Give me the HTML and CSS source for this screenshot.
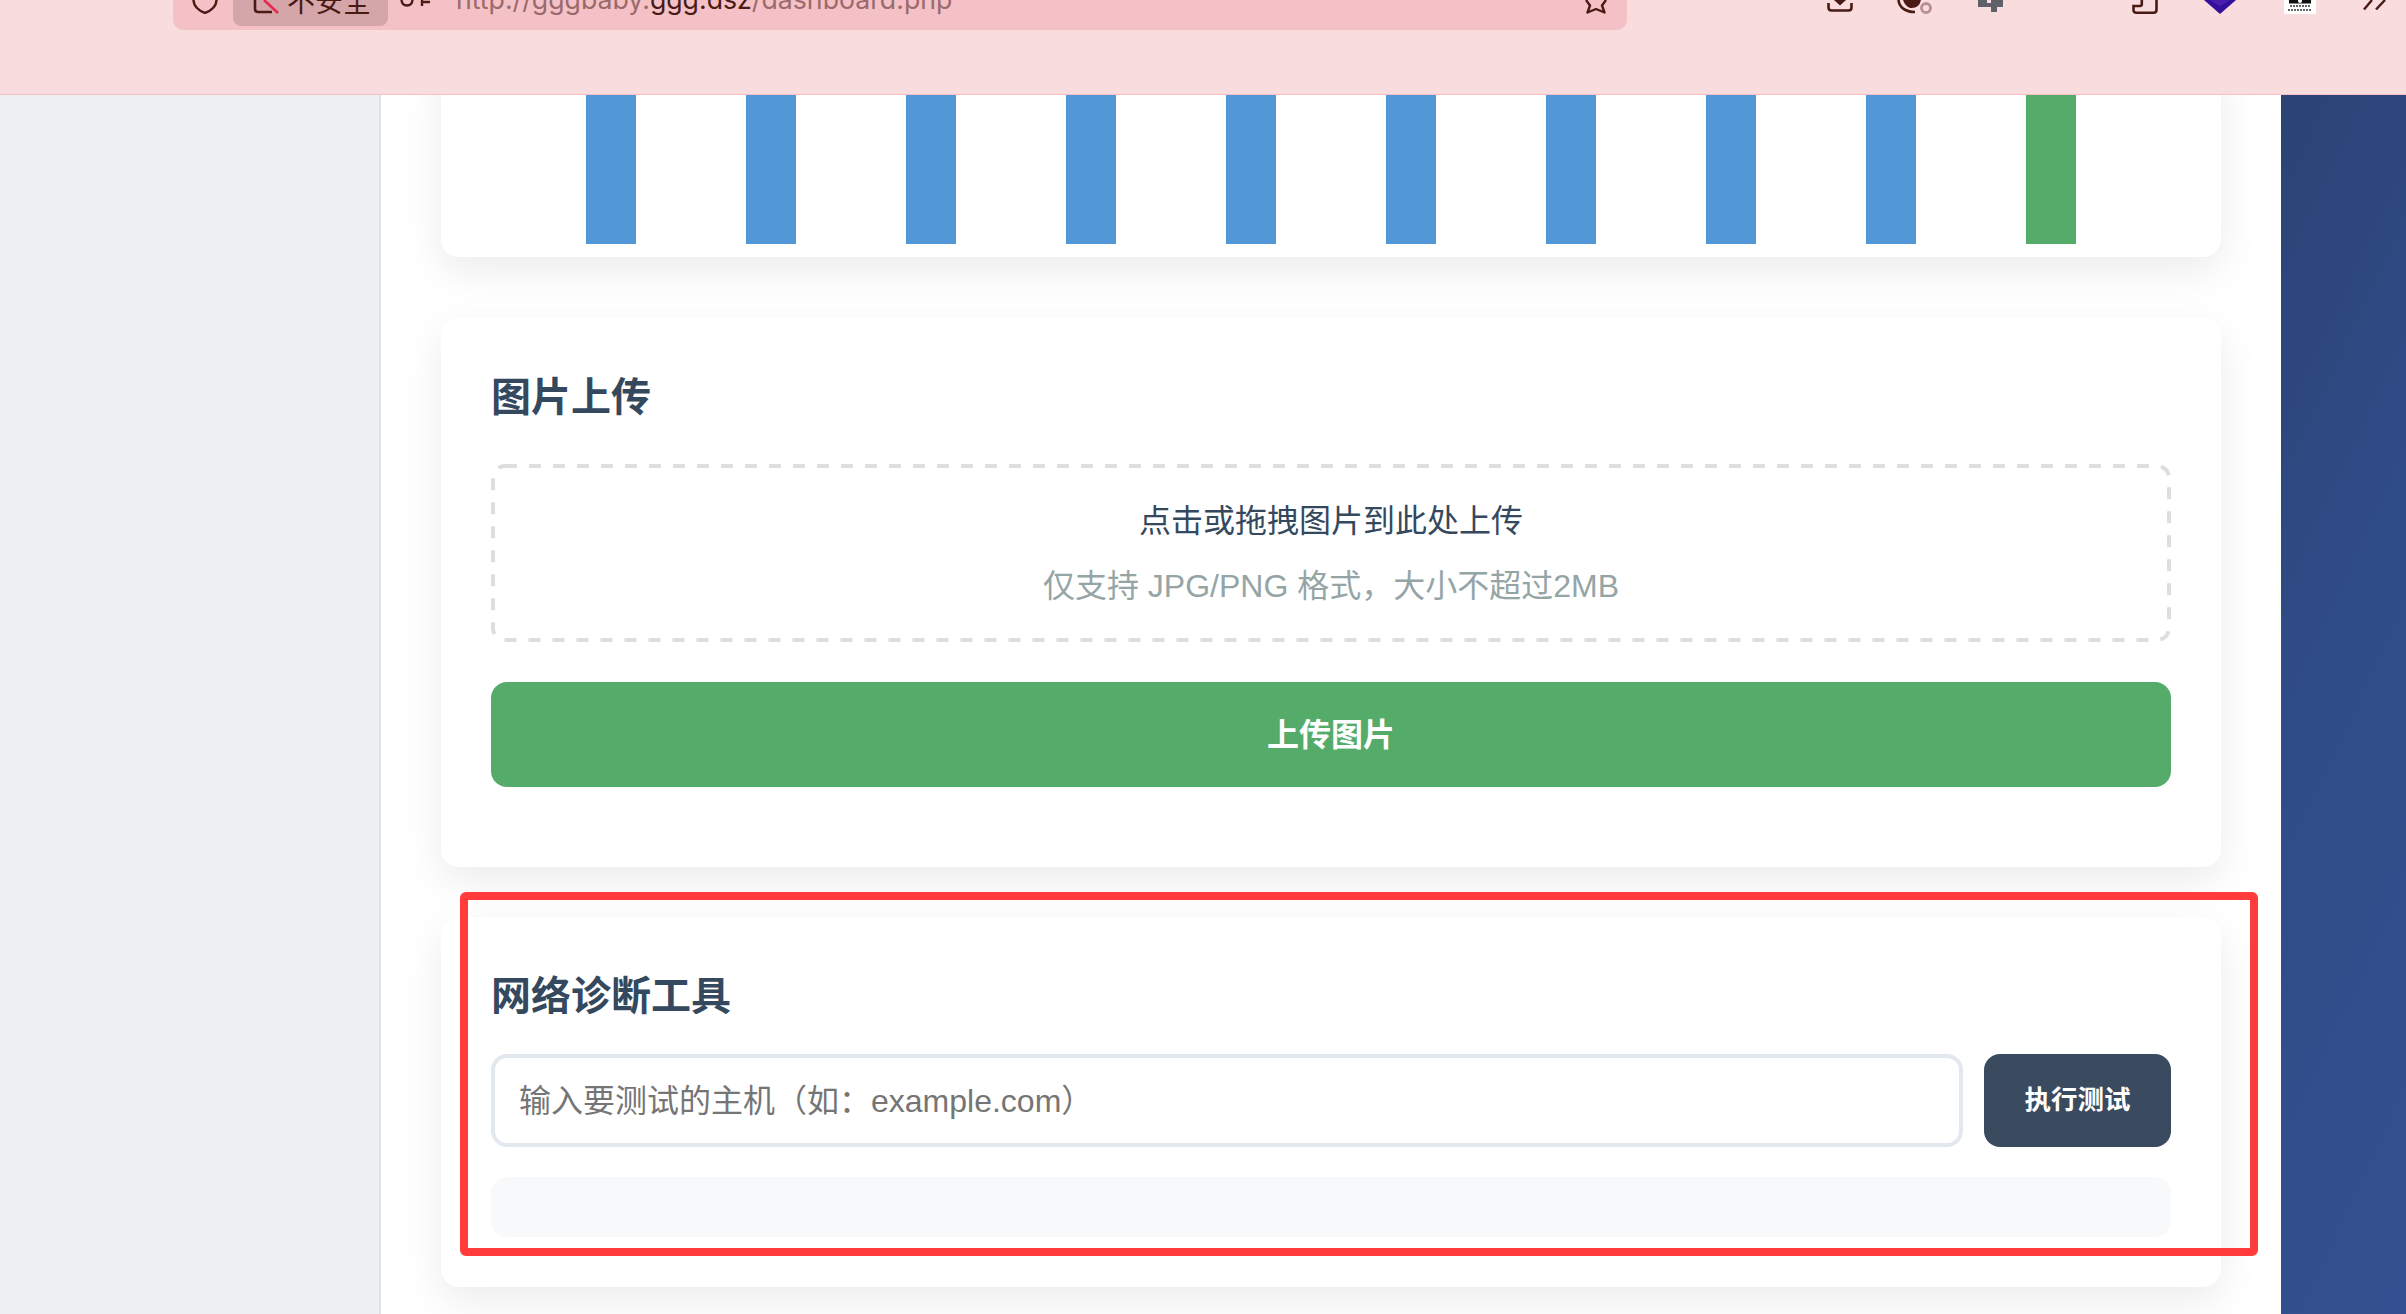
FILE: index.html
```html
<!DOCTYPE html>
<html lang="zh-CN">
<head>
<meta charset="utf-8">
<title>仪表盘</title>
<link rel="stylesheet" href="styles.css">
</head>
<body>
<div class="page">
  <header class="chrome">
    <div class="urlbar">
      <svg class="ico-shield" viewBox="0 0 26 14"><path d="M1.5 0 C1.5 6 7 11 13 13 C19 11 24.500 6 24.500 0" fill="none" stroke="#4a1a14" stroke-width="2.400"/></svg>
      <div class="chip">
        <svg class="ico-doc" viewBox="0 0 26 14"><path d="M2 0 V9 Q2 12 5 12 H19" fill="none" stroke="#4a1a14" stroke-width="2.600"/><path d="M11 0 L25 13" stroke="#e8294f" stroke-width="2.600"/></svg>
        <span class="chip-text">不安全</span>
      </div>
      <svg class="ico-tune" viewBox="0 0 32 7"><path d="M1.500 0 Q2 5.500 7 5.500 Q12 5.500 12.500 0" fill="none" stroke="#4a1a14" stroke-width="2.400"/><path d="M22 0 V6 M22 2 H30" fill="none" stroke="#4a1a14" stroke-width="2.400"/></svg>
      <span class="url">http://gggbaby.<b>ggg.dsz</b>/dashboard.php</span>
      <svg class="ico-star" viewBox="0 0 24 14"><path d="M2 0 L6 5.500 L3.500 12.500 L12 9 L20.500 12.500 L18 5.500 L22 0" fill="none" stroke="#4a1a14" stroke-width="2.400" stroke-linejoin="round"/></svg>
    </div>
    <div class="tools">
      <svg class="ico-down" viewBox="0 0 26 12"><path d="M1.500 3 V7.500 Q1.500 10.500 4.500 10.500 H21.500 Q24.500 10.500 24.500 7.500 V3" fill="none" stroke="#4a1a14" stroke-width="2.600"/><path d="M7 0 H19 L13 5.500 Z" fill="#4a1a14"/></svg>
      <svg class="ico-ext" viewBox="0 0 36 14"><path d="M1.500 0 C2 7 8 12 18 12" fill="none" stroke="#4a1a14" stroke-width="2.600"/><path d="M6 0 H24 Q22 9 13 8 Q8 6 6 0 Z" fill="#4a1a14"/><circle cx="29" cy="8" r="4.500" fill="#f9dcde" stroke="#b98f90" stroke-width="2.800"/></svg>
      <svg class="ico-puzzle" viewBox="0 0 25 12"><path d="M0 0 H9 V3 H13 V0 H25 V7 H19 V12 H13 V7 H0 Z" fill="#5f6068"/></svg>
      <svg class="ico-page" viewBox="0 0 26 14"><path d="M24.500 0 V10 Q24.500 12.700 21.500 12.700 H4.500 Q1.500 12.700 1.500 10 V6 L8 6 Q9.800 6 9.800 4 V0" fill="none" stroke="#4a1a14" stroke-width="2.600"/></svg>
      <svg class="ico-gem" viewBox="0 0 32 14"><path d="M0 0 H32 L16 14 Z" fill="#33109a"/><path d="M6 0 H26 L16 6 Z" fill="#4a1fb0"/></svg>
      <svg class="ico-qr" viewBox="0 0 32 14"><rect width="32" height="14" fill="#fff"/><rect x="5" y="0" width="22" height="3.500" fill="#111"/><circle cx="16" cy="1" r="2" fill="#fff"/><path d="M6 6 H26 M4 10 H28" stroke="#333" stroke-width="1.500" stroke-dasharray="2 1"/></svg>
      <svg class="ico-more" viewBox="0 0 24 10"><path d="M1 9.500 L9 0 M13 9.500 L22 0" fill="none" stroke="#4a1a14" stroke-width="2.400"/></svg>
    </div>
  </header>

  <div class="body-row">
    <aside class="side"></aside>
    <main class="main">
      <section class="card card-chart">
        <div class="bars">
          <div class="bar"></div><div class="bar"></div><div class="bar"></div><div class="bar"></div><div class="bar"></div>
          <div class="bar"></div><div class="bar"></div><div class="bar"></div><div class="bar"></div><div class="bar bar-green"></div>
        </div>
      </section>

      <section class="card card-upload">
        <h3 class="title">图片上传</h3>
        <div class="drop">
          <svg class="drop-border" viewBox="0 0 1680 178"><rect x="2" y="2" width="1676" height="174" rx="12" fill="none" stroke="#dedede" stroke-width="4" stroke-dasharray="12 12"/></svg>
          <p class="drop-main">点击或拖拽图片到此处上传</p>
          <p class="drop-sub">仅支持 JPG/PNG 格式，大小不超过2MB</p>
        </div>
        <button class="btn-upload" type="button">上传图片</button>
      </section>

      <section class="card card-net">
        <h3 class="title title-net">网络诊断工具</h3>
        <div class="net-row">
          <input class="net-input" type="text" placeholder="输入要测试的主机（如：example.com）">
          <button class="btn-run" type="button">执行测试</button>
        </div>
        <div class="net-result"></div>
      </section>
    </main>
    <aside class="rail"></aside>
  </div>

  <div class="highlight"></div>
</div>
</body>
</html>
```

FILE: styles.css
```css
* { box-sizing: border-box; }
html, body { margin: 0; padding: 0; }
body {
  width: 2406px;
  height: 1314px;
  overflow: hidden;
  background: #fff;
  font-family: "Liberation Sans", "Noto Sans CJK SC", sans-serif;
}
.page { position: relative; width: 2406px; height: 1314px; display: flex; flex-direction: column; overflow: hidden; }

/* browser chrome, cut off by the top of the screenshot */
.chrome {
  flex: 0 0 95px;
  display: flex;
  align-items: flex-start;
  padding-left: 173px;
  background: #f9dcde;
  border-bottom: 1px solid #f6c1c6;
}
.urlbar {
  flex: 0 0 1454px;
  height: 30px;
  display: flex;
  align-items: flex-start;
  background: #f4c2c6;
  border-radius: 0 0 10px 10px;
  overflow: hidden;
  color: #4a1a14;
}
.urlbar svg, .tools svg { display: block; flex: none; }
.ico-shield { width: 26px; height: 14px; margin-left: 19px; }
.chip {
  width: 155px;
  height: 26px;
  margin-left: 15px;
  padding-left: 20px;
  display: flex;
  align-items: flex-end;
  overflow: hidden;
  background: #d5a6a9;
  border-radius: 0 0 8px 8px;
}
.ico-doc { width: 26px; height: 14px; align-self: flex-start; }
.chip-text {
  margin-left: 8px;
  margin-bottom: 12px;
  flex: none;
  font-size: 28px;
  line-height: 28px;
  height: 28px;
  color: #4a1a14;
  white-space: nowrap;
  font-family: "Noto Sans CJK SC", sans-serif;
  margin-top: -14px;
}
.ico-tune { width: 32px; height: 7px; margin-left: 12px; }
.url {
  margin-left: 24px;
  margin-top: -17px;
  font-family: Inter, "Liberation Sans", sans-serif;
  font-size: 26.700px;
  line-height: 32px;
  color: #9b6a6c;
  white-space: nowrap;
  flex: none;
  width: 1128px;
}
.url b { font-weight: 400; color: #4a1a14; }
.ico-star { width: 24px; height: 14px; }

.tools { flex: 1; display: flex; align-items: flex-start; }
.ico-down { width: 26px; height: 12px; margin-left: 200px; }
.ico-ext { width: 36px; height: 14px; margin-left: 44px; }
.ico-puzzle { width: 25px; height: 12px; margin-left: 45px; }
.ico-page { width: 26px; height: 14px; margin-left: 129px; }
.ico-gem { width: 32px; height: 14px; margin-left: 46px; }
.ico-qr { width: 32px; height: 14px; margin-left: 48px; }
.ico-more { width: 24px; height: 10px; margin-left: 47px; }

/* page */
.body-row { flex: 1; min-height: 0; display: flex; }
.side { flex: 0 0 381px; background: #ecf0f1; border-right: 2px solid #dfe3e6; }
.rail { flex: 0 0 125px; background: linear-gradient(115deg, #2b4375 0%, #304c88 45%, #335190 100%); }
.main { flex: 1; min-width: 0; overflow: hidden; padding: 0 60px; background: #fff; }

.card {
  background: #fff;
  border-radius: 18px;
  box-shadow: 0 14px 40px rgba(0, 0, 0, 0.08);
  margin-bottom: 50px;
}
.card-chart { margin-top: -40px; padding: 0 50px 13px; margin-bottom: 60px; }
.bars { height: 189px; display: flex; padding-left: 95px; gap: 110px; }
.bar { flex: 0 0 50px; background: #5297d6; }
.bar-green { background: #55ac6a; }

.card-upload { padding: 50px 50px 80px; }
.card-net { padding: 50px; }

.title {
  margin: 0 0 38px;
  padding-top: 2px;
  font-size: 40px;
  line-height: 57px;
  font-weight: 700;
  color: #34495e;
  font-family: "Liberation Sans", "Noto Sans CJK SC", sans-serif;
}
.title-net { margin-bottom: 29px; padding-top: 1px; }

.drop {
  position: relative;
  height: 178px;
  padding: 35px 0 0;
  text-align: center;
}
.drop-border { position: absolute; left: 0; top: 0; width: 100%; height: 100%; }
.drop-main, .drop-sub { margin: 0; font-size: 32px; line-height: 44px; }
.drop-main { color: #34495e; }
.drop-sub { margin-top: 21px; color: #95a5a6; }

.btn-upload {
  display: block;
  width: 100%;
  height: 105px;
  margin-top: 40px;
  padding-top: 2px;
  border: 0;
  border-radius: 16px;
  background: #55ac6a;
  color: #fff;
  font: 700 32px/44px "Liberation Sans", "Noto Sans CJK SC", sans-serif;
}

.net-row { display: flex; gap: 21px; }
.net-input {
  flex: 1;
  min-width: 0;
  height: 93px;
  padding: 2px 24px 0;
  border: 4px solid #e2e8ee;
  border-radius: 16px;
  background: #fff;
  font: 400 32px/44px "Liberation Sans", "Noto Sans CJK SC", sans-serif;
  outline: none;
}
.net-input::placeholder { color: #757575; opacity: 1; }
.btn-run {
  flex: 0 0 187px;
  height: 93px;
  padding-top: 0;
  border: 0;
  border-radius: 16px;
  background: #3a4a5f;
  color: #fff;
  font: 700 26.500px/36px "Liberation Sans", "Noto Sans CJK SC", sans-serif;
}
.net-result { height: 60px; margin-top: 30px; border-radius: 16px; background: #f8f9fa; }

/* annotation drawn over the screenshot */
.highlight {
  position: absolute;
  left: 460px;
  top: 892px;
  width: 1798px;
  height: 364px;
  border: 8px solid #ff3b3b;
  border-radius: 6px;
  pointer-events: none;
}
```
